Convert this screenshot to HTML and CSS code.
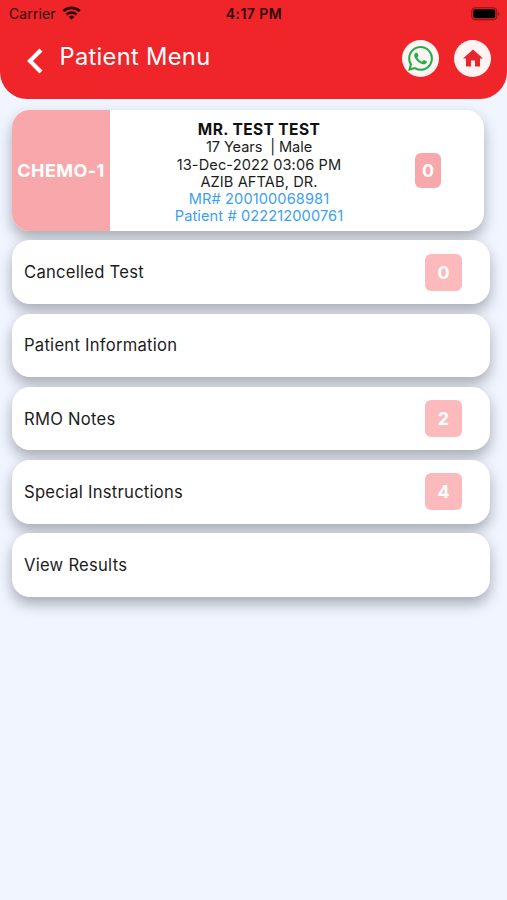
FILE: index.html
```html
<!DOCTYPE html>
<html lang="en">
<head>
<meta charset="utf-8">
<title>Patient Menu</title>
<link rel="stylesheet" href="styles.css">
</head>
<body>
<header class="header">
  <div class="status">
    <div class="carrier"><span>Carrier</span>
      <svg class="wifi" viewBox="0 0 20 14"><path d="M1.4 5.2a12.2 12.2 0 0 1 17.2 0" fill="none" stroke="currentColor" stroke-width="2.8"/><path d="M4.7 8.7a7.5 7.5 0 0 1 10.6 0" fill="none" stroke="currentColor" stroke-width="2.6"/><path d="M10 14 7.1 11a4.1 4.1 0 0 1 5.8 0Z" fill="currentColor"/></svg>
    </div>
    <div class="clock">4:17 PM</div>
    <svg class="battery" viewBox="0 0 30 14"><rect x=".8" y=".8" width="25" height="12" rx="3.2" fill="none" stroke="#7d1418" stroke-width="1"/><rect x="2.3" y="2.3" width="22" height="9" rx="1.8" fill="#000"/><path d="M27.3 4.8a2.4 2.4 0 0 1 0 4Z" fill="#7d1418"/></svg>
  </div>
  <div class="toolbar">
    <svg class="back" viewBox="0 0 18 26"><path d="M15 2 4 13l11 11" fill="none" stroke="#fff" stroke-width="4.2"/></svg>
    <h1 class="title">Patient Menu</h1>
    <button class="round" aria-label="WhatsApp"><svg class="whatsapp" viewBox="0 0 24 24"><path fill="#25b04b" d="M17.472 14.382c-.297-.149-1.758-.867-2.03-.967-.273-.099-.471-.148-.67.15-.197.297-.767.966-.94 1.164-.173.199-.347.223-.644.075-.297-.15-1.255-.463-2.39-1.475-.883-.788-1.48-1.761-1.653-2.059-.173-.297-.018-.458.13-.606.134-.133.298-.347.446-.52.149-.174.198-.298.298-.497.099-.198.05-.371-.025-.52-.075-.149-.669-1.612-.916-2.207-.242-.579-.487-.5-.669-.51-.173-.008-.371-.01-.57-.01-.198 0-.52.074-.792.372-.272.297-1.04 1.016-1.04 2.479 0 1.462 1.065 2.875 1.213 3.074.149.198 2.096 3.2 5.077 4.487.709.306 1.262.489 1.694.625.712.227 1.36.195 1.871.118.571-.085 1.758-.719 2.006-1.413.248-.694.248-1.289.173-1.413-.074-.124-.272-.198-.57-.347m-5.421 7.403h-.004a9.87 9.87 0 0 1-5.031-1.378l-.361-.214-3.741.982.998-3.648-.235-.374a9.86 9.86 0 0 1-1.51-5.26c.001-5.45 4.436-9.884 9.888-9.884 2.64 0 5.122 1.03 6.988 2.898a9.825 9.825 0 0 1 2.893 6.994c-.003 5.45-4.437 9.884-9.885 9.884m8.413-18.297A11.815 11.815 0 0 0 12.05 0C5.495 0 .16 5.335.157 11.892c0 2.096.547 4.142 1.588 5.945L.057 24l6.305-1.654a11.882 11.882 0 0 0 5.683 1.448h.005c6.554 0 11.89-5.335 11.893-11.893a11.821 11.821 0 0 0-3.48-8.413Z"/></svg></button>
    <button class="round" aria-label="Home"><svg class="home" viewBox="2 3 20 17"><path fill="#e9252b" d="M10 20v-6h4v6h5v-8h3L12 3 2 12h3v8z"/></svg></button>
  </div>
</header>
<main class="content">
  <section class="patient">
    <div class="ward">CHEMO-1</div>
    <div class="details">
      <div class="name">MR. TEST TEST</div>
      <div class="age">17 Years&nbsp; | Male</div>
      <div class="date">13-Dec-2022 03:06 PM</div>
      <div class="doctor">AZIB AFTAB, DR.</div>
      <div class="link">MR# 200100068981</div>
      <div class="link">Patient # 022212000761</div>
    </div>
    <div class="count">0</div>
  </section>
  <nav class="menu">
    <a class="row"><span>Cancelled Test</span><b class="badge">0</b></a>
    <a class="row"><span>Patient Information</span></a>
    <a class="row"><span>RMO Notes</span><b class="badge">2</b></a>
    <a class="row"><span>Special Instructions</span><b class="badge">4</b></a>
    <a class="row"><span>View Results</span></a>
  </nav>
</main>
</body>
</html>
```
FILE: styles.css
```css
* { box-sizing: border-box; }
body {
  margin: 0;
  min-height: 900px;
  background: #f0f5ff;
  color: #1c1c1c;
  font-family: Inter, "Liberation Sans", sans-serif;
}
.header {
  height: 98.5px;
  background: #ef252a;
  border-radius: 0 0 27px 27px;
}
.status {
  height: 27px;
  padding: 0 6px 0 9px;
  display: grid;
  grid-template-columns: 1fr auto 1fr;
  align-items: center;
  color: #2c0507;
  font-size: 14px;
}
.carrier { display: flex; align-items: center; gap: 6px; letter-spacing: .1px; }
.wifi { width: 19px; height: 14px; margin-top: -2px; }
.clock { margin-left: -2px; font-weight: 600; letter-spacing: .45px; }
.battery { width: 30px; height: 14px; justify-self: end; }
.toolbar {
  height: 62px;
  padding: 0 16px 0 26px;
  display: flex;
  align-items: center;
}
.back { width: 18px; height: 26px; margin-top: 5px; }
.title {
  margin: -4px auto 0 15.5px;
  color: #fff;
  font-size: 23.7px;
  font-weight: 400;
  letter-spacing: .3px;
}
.round {
  width: 37px;
  height: 37px;
  margin-left: 15.5px;
  padding: 0;
  border: 0;
  border-radius: 50%;
  background: #fff3f3;
  display: flex;
  align-items: center;
  justify-content: center;
}
.whatsapp { width: 25px; height: 25px; }
.home { width: 20px; height: 18px; }
.content { padding: 11px 17px 0 12px; }
.patient {
  width: 472px;
  height: 121.5px;
  display: flex;
  align-items: center;
  overflow: hidden;
  border-radius: 18px;
  background: #fff;
  box-shadow: 0 7px 14px rgba(40, 43, 48, .36);
}
.ward {
  width: 98px;
  align-self: stretch;
  display: flex;
  align-items: center;
  justify-content: center;
  background: #f8a8ab;
  color: #fff;
  font-size: 18px;
  font-weight: 700;
  letter-spacing: .4px;
}
.details {
  width: 298px;
  padding-top: 5px;
  text-align: center;
  font-size: 14.6px;
  line-height: 17.15px;
  letter-spacing: .1px;
}
.age { letter-spacing: -.1px; }
.name { font-size: 15.5px; line-height: 19px; font-weight: 700; letter-spacing: .4px; color: #111; }
.link { color: #3c9ff0; }
.count {
  width: 26px;
  height: 35px;
  margin-left: 7px;
  border-radius: 6px;
  background: #f8a8ab;
  color: #fff;
  font-size: 18px;
  font-weight: 700;
  line-height: 35px;
  text-align: center;
}
.menu { margin-top: 9.3px; display: grid; gap: 9.8px; }
.row {
  height: 63.5px;
  padding: 0 28px 0 12px;
  display: flex;
  align-items: center;
  justify-content: space-between;
  border-radius: 18px;
  background: #fff;
  box-shadow: 0 7px 14px rgba(40, 40, 48, .36);
  font-size: 16.6px;
  letter-spacing: .26px;
}
.badge {
  width: 37px;
  height: 37px;
  border-radius: 6px;
  background: #fcbabc;
  color: #fff;
  font-size: 18px;
  line-height: 37px;
  letter-spacing: 0;
  text-align: center;
}
```
